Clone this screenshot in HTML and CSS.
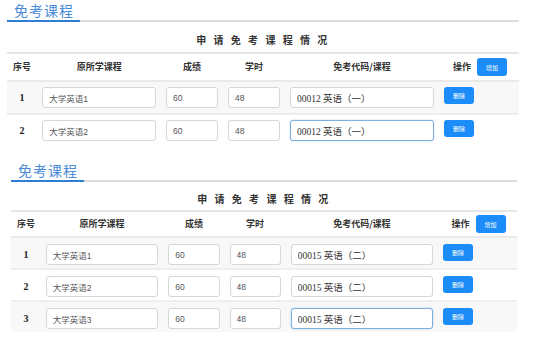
FILE: index.html
```html
<!DOCTYPE html>
<html lang="zh-CN">
<head>
    <meta charset="UTF-8">
    <title>免考课程</title>
    <link rel="stylesheet" href="styles.css">
</head>
<body>
    <section class="panel panel-first">
        <h2 class="panel-title"><span>免考课程</span></h2>
        <div class="caption">申 请 免 考 课 程 情 况</div>
        <table class="course-table">
            <colgroup>
                <col class="c-no"><col class="c-course"><col class="c-score"><col class="c-hours"><col class="c-code"><col class="c-op">
            </colgroup>
            <thead>
                <tr>
                    <th>序号</th>
                    <th>原所学课程</th>
                    <th>成绩</th>
                    <th>学时</th>
                    <th>免考代码/课程</th>
                    <th class="op">操作 <button class="btn btn-add">增加</button></th>
                </tr>
            </thead>
            <tbody>
                <tr class="odd">
                    <td class="no">1</td>
                    <td><input class="field" value="大学英语1"></td>
                    <td><input class="field" value="60"></td>
                    <td><input class="field" value="48"></td>
                    <td><input class="field field-code" value="00012 英语（一）"></td>
                    <td><button class="btn btn-del">删除</button></td>
                </tr>
                <tr>
                    <td class="no">2</td>
                    <td><input class="field" value="大学英语2"></td>
                    <td><input class="field" value="60"></td>
                    <td><input class="field" value="48"></td>
                    <td><input class="field field-code is-focus" value="00012 英语（一）"></td>
                    <td><button class="btn btn-del">删除</button></td>
                </tr>
            </tbody>
        </table>
    </section>

    <section class="panel panel-second">
        <h2 class="panel-title"><span>免考课程</span></h2>
        <div class="caption">申 请 免 考 课 程 情 况</div>
        <table class="course-table">
            <colgroup>
                <col class="c-no"><col class="c-course"><col class="c-score"><col class="c-hours"><col class="c-code"><col class="c-op">
            </colgroup>
            <thead>
                <tr>
                    <th>序号</th>
                    <th>原所学课程</th>
                    <th>成绩</th>
                    <th>学时</th>
                    <th>免考代码/课程</th>
                    <th class="op">操作 <button class="btn btn-add">增加</button></th>
                </tr>
            </thead>
            <tbody>
                <tr class="odd">
                    <td class="no">1</td>
                    <td><input class="field" value="大学英语1"></td>
                    <td><input class="field" value="60"></td>
                    <td><input class="field" value="48"></td>
                    <td><input class="field field-code" value="00015 英语（二）"></td>
                    <td><button class="btn btn-del">删除</button></td>
                </tr>
                <tr>
                    <td class="no">2</td>
                    <td><input class="field" value="大学英语2"></td>
                    <td><input class="field" value="60"></td>
                    <td><input class="field" value="48"></td>
                    <td><input class="field field-code" value="00015 英语（二）"></td>
                    <td><button class="btn btn-del">删除</button></td>
                </tr>
                <tr class="odd">
                    <td class="no">3</td>
                    <td><input class="field" value="大学英语3"></td>
                    <td><input class="field" value="60"></td>
                    <td><input class="field" value="48"></td>
                    <td><input class="field field-code is-focus" value="00015 英语（二）"></td>
                    <td><button class="btn btn-del">删除</button></td>
                </tr>
            </tbody>
        </table>
    </section>
</body>
</html>
```

FILE: styles.css
```css
body {
    margin: 0;
    font-family: "Noto Sans CJK SC", "Noto Sans", sans-serif;
    color: #333;
    background: #ffffff;
}
.panel {
    margin: 0 19px 0 7px;
}
.panel-second {
    margin: 14px 21px 0 11px;
}
.panel-title {
    display: flex;
    margin: 0;
    padding-top: 2px;
    border-bottom: 2px solid #dddddd;
    font-size: 14px;
    line-height: 16px;
    font-weight: normal;
    color: #4a8ad6;
}
.panel-title span {
    padding: 0 6px 2px 7px;
    margin-bottom: -2px;
    border-bottom: 2px solid #2d7fd3;
    letter-spacing: 1px;
}
.caption {
    padding-top: 8px;
    height: 22px;
    line-height: 20px;
    text-align: center;
    font-size: 10px;
    font-weight: bold;
    letter-spacing: 2.5px;
    color: #333;
}
.panel-second .caption {
    padding-top: 7px;
    height: 21px;
}
.course-table {
    width: 100%;
    table-layout: fixed;
    border-collapse: collapse;
    border-top: 2px solid #e6e6e6;
}
.c-no { width: 5.9%; }
.c-course { width: 24.2%; }
.c-score { width: 12.1%; }
.c-hours { width: 12.1%; }
.c-code { width: 30.1%; }
.c-op { width: 15.6%; }
.course-table th {
    height: 26px;
    padding: 0;
    font-size: 9px;
    line-height: 18px;
    font-weight: bold;
    color: #333;
    text-align: center;
    border-bottom: 2px solid #eaeaea;
    white-space: nowrap;
}
.panel-second .course-table th {
    height: 24px;
}
.course-table td {
    padding: 5px 5px;
    vertical-align: top;
    border-bottom: 2px solid #eeeeee;
}
.panel-second .course-table td {
    padding: 6px 5px 3px;
}
.course-table tbody tr:last-child td {
    border-bottom: none;
}
.course-table tr.odd td {
    background: #f8f8f8;
}
.course-table td.no {
    padding-left: 0;
    padding-right: 0;
    text-align: center;
    line-height: 21px;
    font-family: "Liberation Serif", serif;
    font-weight: bold;
    font-size: 10px;
    color: #222;
}
.field {
    display: block;
    box-sizing: border-box;
    width: 100%;
    height: 21px;
    margin: 0;
    padding: 0 6px;
    border: 1px solid #d6d6d6;
    border-radius: 3px;
    background: #fff;
    font-family: "Liberation Sans", "Noto Sans CJK SC", sans-serif;
    font-size: 8.5px;
    color: #555;
    outline: none;
}
.field-code {
    font-family: "Liberation Serif", "Noto Sans CJK SC", serif;
    font-size: 9.5px;
    color: #333;
}
.field.is-focus {
    border-color: #7eaedf;
    box-shadow: 0 0 2px rgba(90, 150, 220, 0.45);
}
.btn {
    display: inline-block;
    box-sizing: border-box;
    padding: 0;
    border: none;
    border-radius: 3px;
    background: #1c8cf8;
    color: #ffffff;
    font-family: "Noto Sans CJK SC", sans-serif;
    font-size: 6px;
    cursor: pointer;
}
.btn-add {
    width: 30px;
    height: 18px;
    margin-left: 4px;
    vertical-align: top;
}
.btn-del {
    display: block;
    width: 30px;
    height: 17px;
}
.course-table th.op {
    padding-left: 2px;
}
```
